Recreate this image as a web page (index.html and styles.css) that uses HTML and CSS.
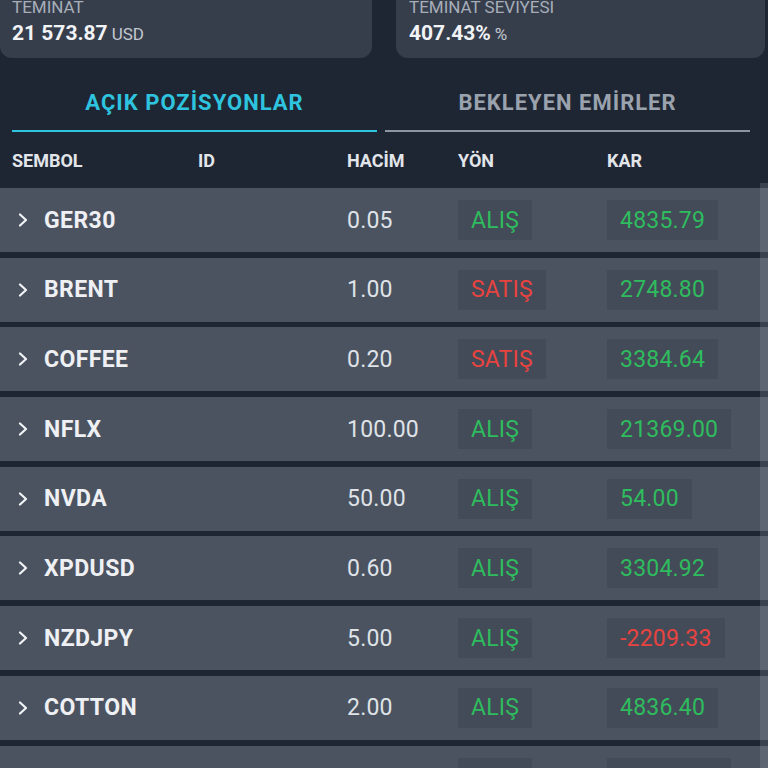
FILE: index.html
```html
<!DOCTYPE html>
<html lang="tr">
<head>
<meta charset="utf-8">
<title>Pozisyonlar</title>
<link rel="stylesheet" href="styles.css">
</head>
<body>
<div class="page">
  <div class="summary">
    <div class="card">
      <div class="card-label">TEMİNAT</div>
      <div class="card-value"><b>21 573.87</b><span class="unit">USD</span></div>
    </div>
    <div class="card card-right">
      <div class="card-label">TEMİNAT SEVİYESİ</div>
      <div class="card-value"><b>407.43%</b><span class="unit">%</span></div>
    </div>
  </div>

  <div class="tabs">
    <div class="tab active">AÇIK POZİSYONLAR</div>
    <div class="tab">BEKLEYEN EMİRLER</div>
  </div>

  <div class="grid head">
    <div>SEMBOL</div><div>ID</div><div>HACİM</div><div>YÖN</div><div>KAR</div>
  </div>

  <div class="rows">
    <div class="grid row"><div class="sym"><svg class="chev" viewBox="0 0 10 14"><polyline points="2,1.5 8,7 2,12.5"/></svg>GER30</div><div></div><div class="num">0.05</div><div><span class="chip buy">ALIŞ</span></div><div><span class="chip pos">4835.79</span></div></div>
    <div class="grid row"><div class="sym"><svg class="chev" viewBox="0 0 10 14"><polyline points="2,1.5 8,7 2,12.5"/></svg>BRENT</div><div></div><div class="num">1.00</div><div><span class="chip sell">SATIŞ</span></div><div><span class="chip pos">2748.80</span></div></div>
    <div class="grid row"><div class="sym"><svg class="chev" viewBox="0 0 10 14"><polyline points="2,1.5 8,7 2,12.5"/></svg>COFFEE</div><div></div><div class="num">0.20</div><div><span class="chip sell">SATIŞ</span></div><div><span class="chip pos">3384.64</span></div></div>
    <div class="grid row"><div class="sym"><svg class="chev" viewBox="0 0 10 14"><polyline points="2,1.5 8,7 2,12.5"/></svg>NFLX</div><div></div><div class="num">100.00</div><div><span class="chip buy">ALIŞ</span></div><div><span class="chip pos">21369.00</span></div></div>
    <div class="grid row"><div class="sym"><svg class="chev" viewBox="0 0 10 14"><polyline points="2,1.5 8,7 2,12.5"/></svg>NVDA</div><div></div><div class="num">50.00</div><div><span class="chip buy">ALIŞ</span></div><div><span class="chip pos">54.00</span></div></div>
    <div class="grid row"><div class="sym"><svg class="chev" viewBox="0 0 10 14"><polyline points="2,1.5 8,7 2,12.5"/></svg>XPDUSD</div><div></div><div class="num">0.60</div><div><span class="chip buy">ALIŞ</span></div><div><span class="chip pos">3304.92</span></div></div>
    <div class="grid row"><div class="sym"><svg class="chev" viewBox="0 0 10 14"><polyline points="2,1.5 8,7 2,12.5"/></svg>NZDJPY</div><div></div><div class="num">5.00</div><div><span class="chip buy">ALIŞ</span></div><div><span class="chip neg">-2209.33</span></div></div>
    <div class="grid row"><div class="sym"><svg class="chev" viewBox="0 0 10 14"><polyline points="2,1.5 8,7 2,12.5"/></svg>COTTON</div><div></div><div class="num">2.00</div><div><span class="chip buy">ALIŞ</span></div><div><span class="chip pos">4836.40</span></div></div>
    <div class="grid row"><div class="sym"><svg class="chev" viewBox="0 0 10 14"><polyline points="2,1.5 8,7 2,12.5"/></svg>SILVER</div><div></div><div class="num">1.00</div><div><span class="chip buy">ALIŞ</span></div><div><span class="chip pos">10450.00</span></div></div>
  </div>
  <div class="scrollbar"></div>
</div>
</body>
</html>
```

FILE: styles.css
```css
html, body {
  margin: 0;
  padding: 0;
  background: #1f2633;
  height: 768px;
  overflow: hidden;
}
body {
  font-family: Roboto, "Noto Sans", "Liberation Sans", sans-serif;
  color: #eef0f3;
}
.page {
  position: relative;
  width: 768px;
  height: 768px;
  overflow: hidden;
}
.summary {
  display: grid;
  grid-template-columns: 372px 369px;
  column-gap: 24px;
  margin-top: -4px;
}
.card {
  background: #363e4c;
  border-radius: 0 0 12px 12px;
  padding: 0 12px 0 12px;
  height: 62px;
  box-sizing: border-box;
}
.card-right {
  padding-left: 13px;
}
.card-label {
  font-size: 17px;
  line-height: 22px;
  color: #a7aeb9;
}
.card-value {
  display: flex;
  align-items: baseline;
  gap: 4px;
  line-height: 30px;
}
.card-value b {
  font-size: 21px;
  font-weight: 700;
  color: #f1f3f6;
}
.unit {
  font-size: 17px;
  color: #c3c8d0;
}
.tabs {
  display: grid;
  grid-template-columns: 365px 365px;
  column-gap: 8px;
  padding: 0 18px 0 12px;
  height: 74px;
  align-items: end;
}
.tab {
  text-align: center;
  font-size: 22px;
  font-weight: 700;
  letter-spacing: 1px;
  color: #9aa2ae;
  padding-bottom: 15px;
  border-bottom: 2px solid #8b94a2;
}
.tab.active {
  color: #2ec3df;
  border-bottom-color: #2ec3df;
}
.grid {
  display: grid;
  grid-template-columns: 186px 149px 111px 149px 1fr;
  padding-left: 12px;
  align-items: center;
}
.head {
  height: 56px;
  font-size: 18px;
  font-weight: 700;
  color: #e2e5ea;
}
.rows {
  display: flex;
  flex-direction: column;
  gap: 5.7px;
}
.row {
  height: 64px;
  background: #4b5361;
  font-size: 23px;
  letter-spacing: 0.2px;
  flex-shrink: 0;
}
.sym {
  display: flex;
  align-items: center;
  font-weight: 700;
  letter-spacing: 0.4px;
  color: #eef0f3;
}
.chev {
  width: 10px;
  height: 14px;
  margin: 0 16px 0 6px;
  fill: none;
  stroke: #f1f3f6;
  stroke-width: 2.2;
  stroke-linecap: round;
  stroke-linejoin: round;
}
.num {
  color: #dfe2e7;
}
.chip {
  display: inline-flex;
  align-items: center;
  height: 40px;
  padding: 0 13px;
  background: #434b58;
}
.buy, .pos {
  color: #2fbc5e;
}
.sell, .neg {
  color: #e8433f;
}
.scrollbar {
  position: absolute;
  right: 0;
  top: 183px;
  width: 8px;
  bottom: 0;
  background: rgba(160, 168, 180, 0.22);
}
```
